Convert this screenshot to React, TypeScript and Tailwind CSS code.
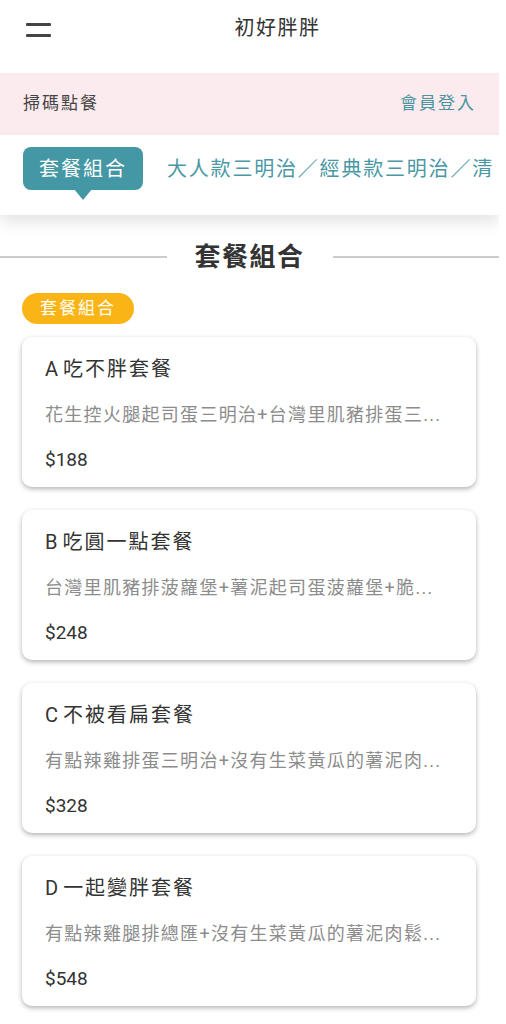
import React from "react";

const items = [
  { name: "A吃不胖套餐", desc: "花生控火腿起司蛋三明治+台灣里肌豬排蛋三...", price: "$188" },
  { name: "B吃圓一點套餐", desc: "台灣里肌豬排菠蘿堡+薯泥起司蛋菠蘿堡+脆...", price: "$248" },
  { name: "C不被看扁套餐", desc: "有點辣雞排蛋三明治+沒有生菜黃瓜的薯泥肉...", price: "$328" },
  { name: "D一起變胖套餐", desc: "有點辣雞腿排總匯+沒有生菜黃瓜的薯泥肉鬆...", price: "$548" },
];

function Card({ name, desc, price }: { name: string; desc: string; price: string }) {
  const letter = name.slice(0, 1);
  const rest = name.slice(1);
  return (
    <div className="bg-white rounded-[10px] shadow-[0_2px_5px_rgba(0,0,0,0.3)] h-[150px] px-[23px] pt-[18px] pb-[15px] flex flex-col">
      <div className="text-[20px] leading-[28px] text-[#333] tracking-[2px] whitespace-nowrap">
        <span className="mr-[3px]">{letter}</span>
        {rest}
      </div>
      <div className="mt-[20px] text-[18px] leading-[24px] text-[#8c8c8c] tracking-[1.3px] whitespace-nowrap overflow-hidden">
        {desc}
      </div>
      <div className="mt-[21px] text-[19px] leading-[24px] text-[#333]">{price}</div>
    </div>
  );
}

export default function App() {
  return (
    <div
      className="w-[499px] bg-white overflow-hidden min-h-[1024px]"
      style={{ fontFamily: 'Roboto, "Noto Sans CJK TC", sans-serif' }}
    >
      {/* header */}
      <div className="h-[73px] relative flex items-start">
        <div className="absolute left-[26px] top-[23px] flex flex-col gap-[8px]">
          <div className="w-[25px] h-[3px] bg-[#444] rounded-[1px]" />
          <div className="w-[25px] h-[3px] bg-[#444] rounded-[1px]" />
        </div>
        <div className="w-full text-center pt-[14px] text-[20px] leading-[28px] tracking-[1.5px] text-[#333] pl-[56px]">
          初好胖胖
        </div>
      </div>

      {/* pink bar */}
      <div className="h-[62px] bg-[#fcebee] flex items-center justify-between pl-[23px] pr-[23px]">
        <span className="text-[17px] tracking-[2px] text-[#444]">掃碼點餐</span>
        <span className="text-[17px] tracking-[2px] text-[#4a94a1]">會員登入</span>
      </div>

      {/* tabs */}
      <div className="relative z-10 h-[80px] bg-white shadow-[0_8px_14px_rgba(0,0,0,0.10)] flex items-start pt-[12px] pl-[23px] whitespace-nowrap">
        <div className="relative shrink-0">
          <div className="h-[43px] w-[120px] rounded-[8px] bg-[#4497a4] text-white text-[20px] tracking-[2px] flex items-center justify-center">
            套餐組合
          </div>
          <div className="absolute left-1/2 -translate-x-1/2 top-[42px] w-0 h-0 border-l-[9px] border-r-[9px] border-t-[11px] border-l-transparent border-r-transparent border-t-[#4497a4]" />
        </div>
        <div className="ml-[24px] h-[43px] flex items-center text-[20px] tracking-[1.8px] text-[#4a98a5]">
          大人款三明治／經典款三明治／清
        </div>
      </div>

      {/* section */}
      <div className="mt-[24px] flex items-center">
        <div className="flex-1 h-[2px] bg-[#cccccc]" />
        <div className="px-[28px] text-[26px] leading-[36px] font-bold text-[#333] tracking-[1.5px]">套餐組合</div>
        <div className="flex-1 h-[2px] bg-[#cccccc]" />
      </div>

      <div className="pl-[22px] pr-[23px]">
        <div className="mt-[18px] inline-flex h-[31px] items-center px-[18px] rounded-full bg-[#fbb415] text-white text-[17px] tracking-[2px]">
          套餐組合
        </div>
        <div className="mt-[13px] flex flex-col gap-[23px] pb-[20px]">
          {items.map((it) => (
            <Card key={it.name} {...it} />
          ))}
        </div>
      </div>
    </div>
  );
}
